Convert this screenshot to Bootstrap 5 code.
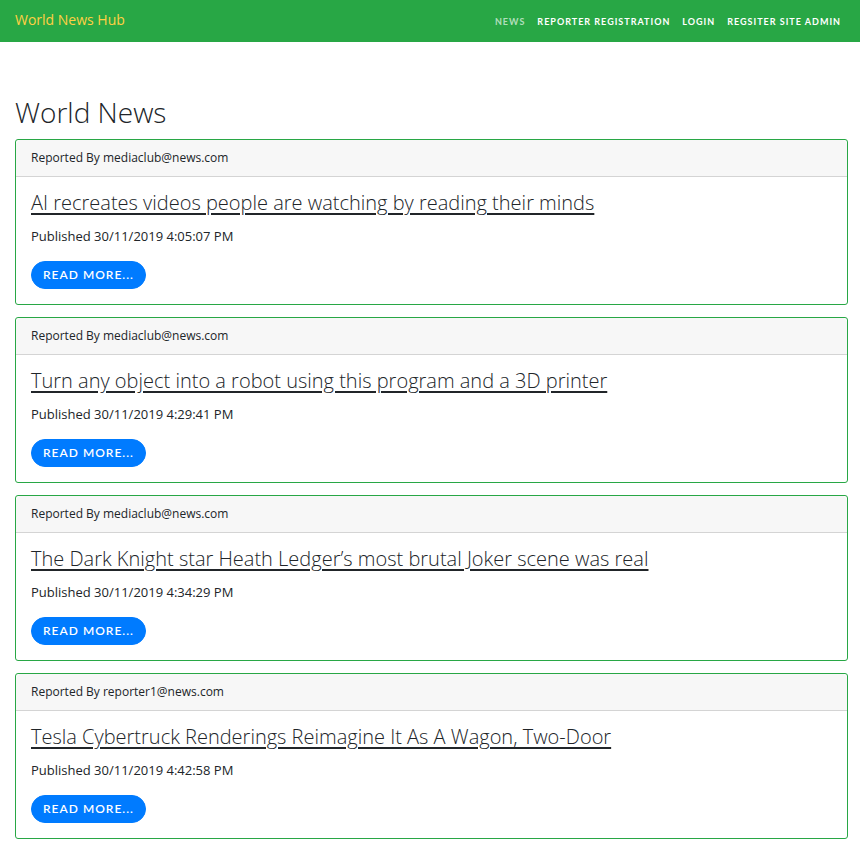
<!DOCTYPE html>
<html lang="en">
<head>
<meta charset="utf-8">
<meta name="viewport" content="width=device-width, initial-scale=1">
<title>World News Hub</title>
<link href="https://cdn.jsdelivr.net/npm/bootstrap@5.3.0/dist/css/bootstrap.min.css" rel="stylesheet">
<style>
  body { font-family: "Open Sans", sans-serif; font-weight: 400; font-size: 13px; line-height: 20px; color: #212529; }
  .site-nav { background: #28a745; padding: 4px 13px 4px 15px; min-height: 42px; }
  .site-nav .navbar-brand { color: #ffd044; font-weight: 400; font-size: 14px; line-height: 18px; padding: 0 0 2px; margin: 0; }
  .site-nav .navbar-nav .nav-link { color: #fff; font-family: "Lato", sans-serif; font-size: 9px; font-weight: 700; letter-spacing: 1px; line-height: 20px; text-transform: uppercase; padding: 5px 6px 3px; }
  .site-nav .navbar-nav .nav-link.active { color: rgba(255, 255, 255, .65); }
  .news-page { padding: 53px 12px 8px 15px; }
  .page-title, .story-title { font-weight: 300; }
  .page-title { font-size: 28px; line-height: 34px; margin-bottom: 10px; }
  .story { border-color: #28a745; border-radius: 3px; }
  .story .card-header { background: #f7f7f7; border-color: #d4d4d4; font-size: 12px; padding: 8px 15px; }
  .story .card-body { padding: 15px; }
  .story-title { font-size: 20px; line-height: 22px; margin-bottom: 12px; }
  .story-title u { text-decoration-thickness: 2px; text-underline-offset: 3px; }
  .story .card-text { margin-bottom: 15px; }
  .btn-story { --bs-btn-bg: #007bff; --bs-btn-border-color: #007bff; font-family: "Lato", sans-serif; font-size: 12px; font-weight: 600; letter-spacing: 1px; line-height: 18px; padding: 4px 11px; text-transform: uppercase; }
  .story-list { gap: 12px; }
</style>
<script src="https://cdn.jsdelivr.net/npm/bootstrap@5.3.0/dist/js/bootstrap.bundle.min.js"></script>
</head>
<body>
<nav class="site-nav navbar navbar-expand">
  <a class="navbar-brand" href="#">World News Hub</a>
  <ul class="navbar-nav ms-auto">
    <li class="nav-item"><a class="nav-link active" aria-current="page" href="#">News</a></li>
    <li class="nav-item"><a class="nav-link" href="#">Reporter Registration</a></li>
    <li class="nav-item"><a class="nav-link" href="#">Login</a></li>
    <li class="nav-item"><a class="nav-link" href="#">Regsiter Site Admin</a></li>
  </ul>
</nav>
<main class="news-page">
  <h1 class="page-title">World News</h1>
  <div class="story-list d-flex flex-column">
    <article class="story card">
      <div class="card-header">Reported By mediaclub@news.com</div>
      <div class="card-body">
        <h2 class="story-title"><u>AI recreates videos people are watching by reading their minds</u></h2>
        <p class="card-text">Published 30/11/2019 4:05:07 PM</p>
        <a class="btn btn-primary btn-story rounded-pill d-table" href="#">Read more...</a>
      </div>
    </article>
    <article class="story card">
      <div class="card-header">Reported By mediaclub@news.com</div>
      <div class="card-body">
        <h2 class="story-title"><u>Turn any object into a robot using this program and a 3D printer</u></h2>
        <p class="card-text">Published 30/11/2019 4:29:41 PM</p>
        <a class="btn btn-primary btn-story rounded-pill d-table" href="#">Read more...</a>
      </div>
    </article>
    <article class="story card">
      <div class="card-header">Reported By mediaclub@news.com</div>
      <div class="card-body">
        <h2 class="story-title"><u>The Dark Knight star Heath Ledger’s most brutal Joker scene was real</u></h2>
        <p class="card-text">Published 30/11/2019 4:34:29 PM</p>
        <a class="btn btn-primary btn-story rounded-pill d-table" href="#">Read more...</a>
      </div>
    </article>
    <article class="story card">
      <div class="card-header">Reported By reporter1@news.com</div>
      <div class="card-body">
        <h2 class="story-title"><u>Tesla Cybertruck Renderings Reimagine It As A Wagon, Two-Door</u></h2>
        <p class="card-text">Published 30/11/2019 4:42:58 PM</p>
        <a class="btn btn-primary btn-story rounded-pill d-table" href="#">Read more...</a>
      </div>
    </article>
  </div>
</main>
</body>
</html>
